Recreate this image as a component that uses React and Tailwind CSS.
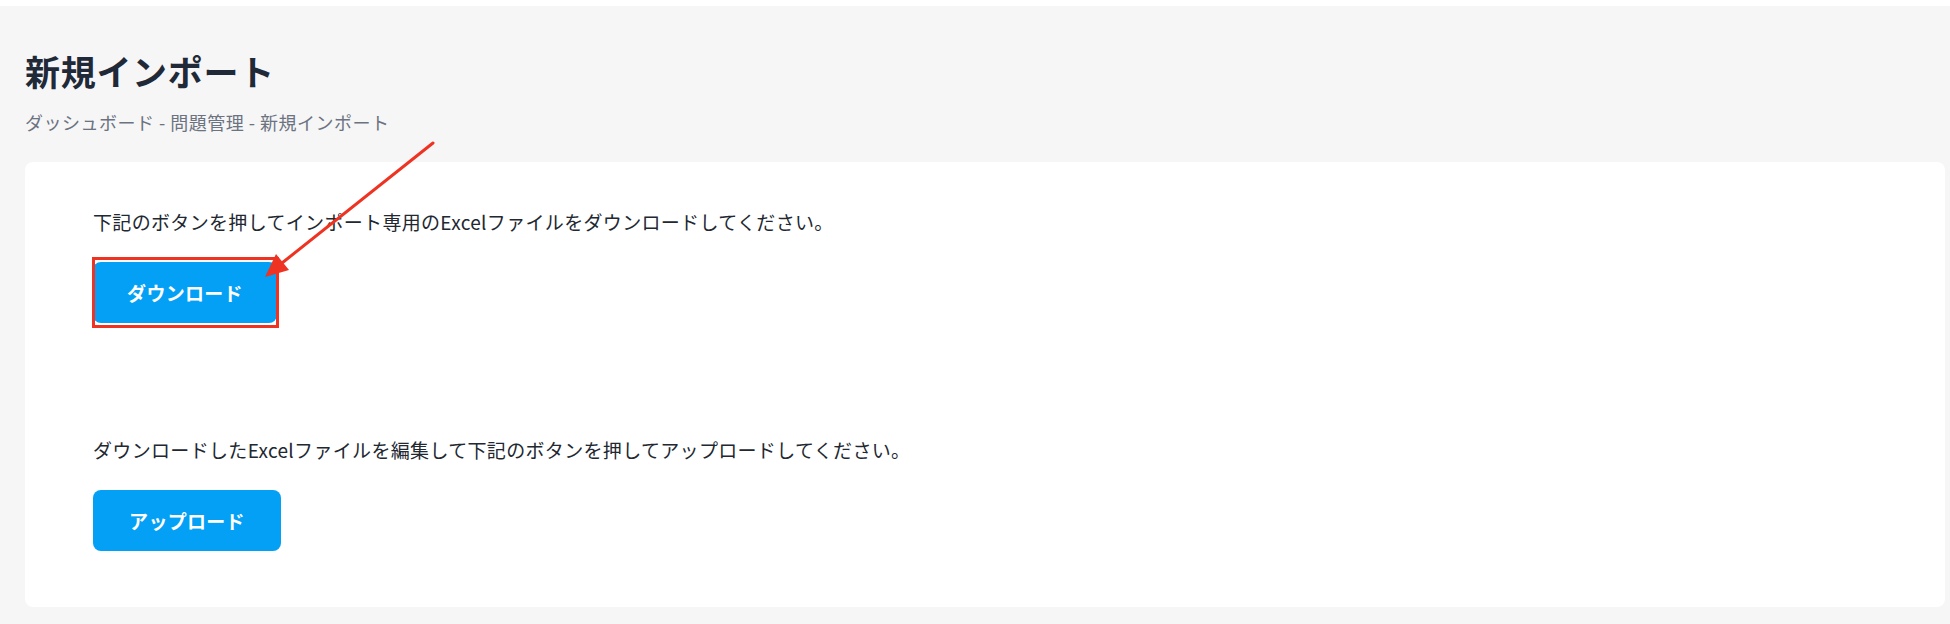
import React from 'react';

const FONT = { fontFamily: '"Noto Sans CJK JP", "Noto Sans", "Liberation Sans", sans-serif' };

// Red annotation arrow that points at the download button
const Arrow = () => (
  <svg
    className="absolute left-0 top-0 pointer-events-none"
    width="1950"
    height="624"
    viewBox="0 0 1950 624"
  >
    <line x1="433" y1="143" x2="282" y2="263" stroke="#ee3322" strokeWidth="3" strokeLinecap="round" />
    <polygon points="265,277 276,254 289,270" fill="#ee3322" />
  </svg>
);

const PrimaryButton = ({ children, width = 'w-[188px]' }) => (
  <button
    type="button"
    className={`${width} h-[61px] rounded-[8px] bg-[#03a0f6] text-white text-[19px] font-bold leading-none tracking-[0.3px]`}
  >
    {children}
  </button>
);

export default function App() {
  return (
    <div className="relative w-[1950px] h-[624px] bg-white pt-[6px] overflow-hidden" style={FONT}>
      <div className="h-[618px] bg-[#f6f6f7] pl-[25px] pr-[5px] pt-[44px]">
        <h1 className="text-[35px] leading-[42px] font-bold tracking-[0.7px] text-[#1f2937]">新規インポート</h1>
        <p className="mt-[17px] text-[18px] leading-[26px] tracking-[0.5px] text-[#6b7280]">
          ダッシュボード - 問題管理 - 新規インポート
        </p>

        <div className="mt-[27px] rounded-[8px] bg-white pl-[68px] pt-[46px] pb-[56px]">
          <p className="text-[19px] leading-[28px] tracking-[0.33px] text-[#222831]">
            下記のボタンを押してインポート専用のExcelファイルをダウンロードしてください。
          </p>
          <div className="relative mt-[26px] w-[188px]">
            <PrimaryButton width="w-[184px]">ダウンロード</PrimaryButton>
            <div className="absolute left-[-1px] top-[-5px] w-[187px] h-[71px] border-[3px] border-[#ee3322]" />
          </div>

          <p className="mt-[113px] text-[19px] leading-[28px] tracking-[0.33px] text-[#222831]">
            ダウンロードしたExcelファイルを編集して下記のボタンを押してアップロードしてください。
          </p>
          <div className="mt-[26px]">
            <PrimaryButton>アップロード</PrimaryButton>
          </div>
        </div>
      </div>
      <Arrow />
    </div>
  );
}
